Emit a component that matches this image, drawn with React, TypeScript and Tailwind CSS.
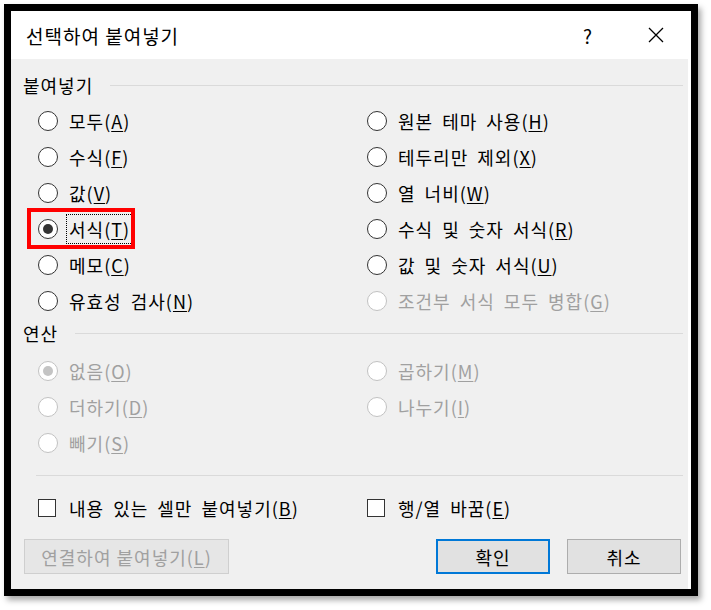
import React from 'react';

type Option = {
  label: string;
  hotkey: string;
  disabled?: boolean;
  checked?: boolean;
  focused?: boolean;
  marked?: boolean;
};

const pasteLeft: Option[] = [
  { label: '모두', hotkey: 'A' },
  { label: '수식', hotkey: 'F' },
  { label: '값', hotkey: 'V' },
  { label: '서식', hotkey: 'T', checked: true, focused: true, marked: true },
  { label: '메모', hotkey: 'C' },
  { label: '유효성 검사', hotkey: 'N' },
];

const pasteRight: Option[] = [
  { label: '원본 테마 사용', hotkey: 'H' },
  { label: '테두리만 제외', hotkey: 'X' },
  { label: '열 너비', hotkey: 'W' },
  { label: '수식 및 숫자 서식', hotkey: 'R' },
  { label: '값 및 숫자 서식', hotkey: 'U' },
  { label: '조건부 서식 모두 병합', hotkey: 'G', disabled: true },
];

const opLeft: Option[] = [
  { label: '없음', hotkey: 'O', disabled: true, checked: true },
  { label: '더하기', hotkey: 'D', disabled: true },
  { label: '빼기', hotkey: 'S', disabled: true },
];

const opRight: Option[] = [
  { label: '곱하기', hotkey: 'M', disabled: true },
  { label: '나누기', hotkey: 'I', disabled: true },
];

function Label({ text, hotkey }: { text: string; hotkey: string }) {
  return (
    <span>
      {text}(<u className="underline-offset-2">{hotkey}</u>)
    </span>
  );
}

function Radio({ opt }: { opt: Option }) {
  return (
    <div className="relative flex h-[36px] items-center">
      <span
        className={`flex h-[20px] w-[20px] shrink-0 items-center justify-center rounded-full border-[1.5px] bg-white ${
          opt.disabled ? 'border-[#c2c2c2]' : 'border-[#333333]'
        }`}
      >
        {opt.checked && (
          <span
            className={`h-[10px] w-[10px] rounded-full ${
              opt.disabled ? 'bg-[#c4c4c4]' : 'bg-[#333333]'
            }`}
          />
        )}
      </span>
      <span
        className={`ml-[8px] flex h-[30px] items-center px-[2px] ${
          opt.focused ? 'border border-dotted border-black' : 'border border-transparent'
        } ${opt.disabled ? 'text-[#a0a0a0]' : 'text-black'}`}
      >
        <Label text={opt.label} hotkey={opt.hotkey} />
      </span>
      {opt.marked && (
        <div className="absolute left-[-11px] top-[-3px] h-[41px] w-[108px] border-[4px] border-[#ff0000]" />
      )}
    </div>
  );
}

function GroupHeader({ title }: { title: string }) {
  return (
    <div className="flex h-[24px] items-center">
      <span className="text-black">{title}</span>
      <div className="ml-[17px] h-px flex-1 bg-[#dadada]" />
    </div>
  );
}

function Checkbox({ text, hotkey }: { text: string; hotkey: string }) {
  return (
    <div className="flex h-[24px] items-center">
      <span className="h-[18px] w-[18px] shrink-0 border-[1.5px] border-[#333333] bg-white" />
      <span className="ml-[13px] text-black">
        <Label text={text} hotkey={hotkey} />
      </span>
    </div>
  );
}

export default function App() {
  return (
    <div className="min-h-[610px] bg-white pl-[4px] pt-[4px]">
      <div
        className="flex h-[592px] w-[694px] flex-col border-[7px] border-black text-[18px] leading-none tracking-[1px] [word-spacing:4px] shadow-[3px_4px_6px_rgba(0,0,0,0.35)]"
        style={{ fontFamily: '"Noto Sans CJK KR", "Noto Sans", sans-serif' }}
      >
        {/* title bar */}
        <div className="flex h-[48px] shrink-0 items-center bg-white pl-[15px]">
          <span className="flex-1 text-[19px] tracking-[1px] text-black [word-spacing:0px]">
            선택하여 붙여넣기
          </span>
          <span className="mr-[55px] text-[19px] text-black">?</span>
          <svg width="16" height="16" viewBox="0 0 16 16" className="mr-[27px]">
            <path d="M1 1 L15 15 M15 1 L1 15" stroke="#000" strokeWidth="1.3" fill="none" />
          </svg>
        </div>

        {/* body */}
        <div className="flex flex-1 flex-col border-r-[3px] border-white bg-[#f0f0f0] pb-[15px] pl-[12px] pr-[5px] pt-[14px]">
          <GroupHeader title="붙여넣기" />
          <div className="mb-[2px] mt-[6px] grid grid-cols-[329px_1fr] pl-[15px]">
            <div className="flex flex-col">
              {pasteLeft.map((o) => (
                <Radio key={o.hotkey} opt={o} />
              ))}
            </div>
            <div className="flex flex-col">
              {pasteRight.map((o) => (
                <Radio key={o.hotkey} opt={o} />
              ))}
            </div>
          </div>

          <GroupHeader title="연산" />
          <div className="mt-[8px] grid grid-cols-[329px_1fr] pl-[15px]">
            <div className="flex flex-col">
              {opLeft.map((o) => (
                <Radio key={o.hotkey} opt={o} />
              ))}
            </div>
            <div className="flex flex-col">
              {opRight.map((o) => (
                <Radio key={o.hotkey} opt={o} />
              ))}
            </div>
          </div>

          <div className="ml-[13px] mt-[14px] h-px bg-[#dadada]" />

          <div className="mt-[20px] grid grid-cols-[329px_1fr] pl-[15px]">
            <Checkbox text="내용 있는 셀만 붙여넣기" hotkey="B" />
            <Checkbox text="행/열 바꿈" hotkey="E" />
          </div>

          <div className="mt-auto flex items-center justify-between pl-[1px] pr-[2px]">
            <button className="flex h-[35px] w-[205px] items-center justify-center border border-[#cfcfcf] bg-[#e6e6e6] text-[#a0a0a0]">
              <Label text="연결하여 붙여넣기" hotkey="L" />
            </button>
            <div className="flex gap-[17px]">
              <button className="flex h-[35px] w-[114px] items-center justify-center border-2 border-[#0078d7] bg-[#e1e1e1] text-black">
                확인
              </button>
              <button className="flex h-[35px] w-[114px] items-center justify-center border border-[#adadad] bg-[#e1e1e1] text-black">
                취소
              </button>
            </div>
          </div>
        </div>
      </div>
    </div>
  );
}
